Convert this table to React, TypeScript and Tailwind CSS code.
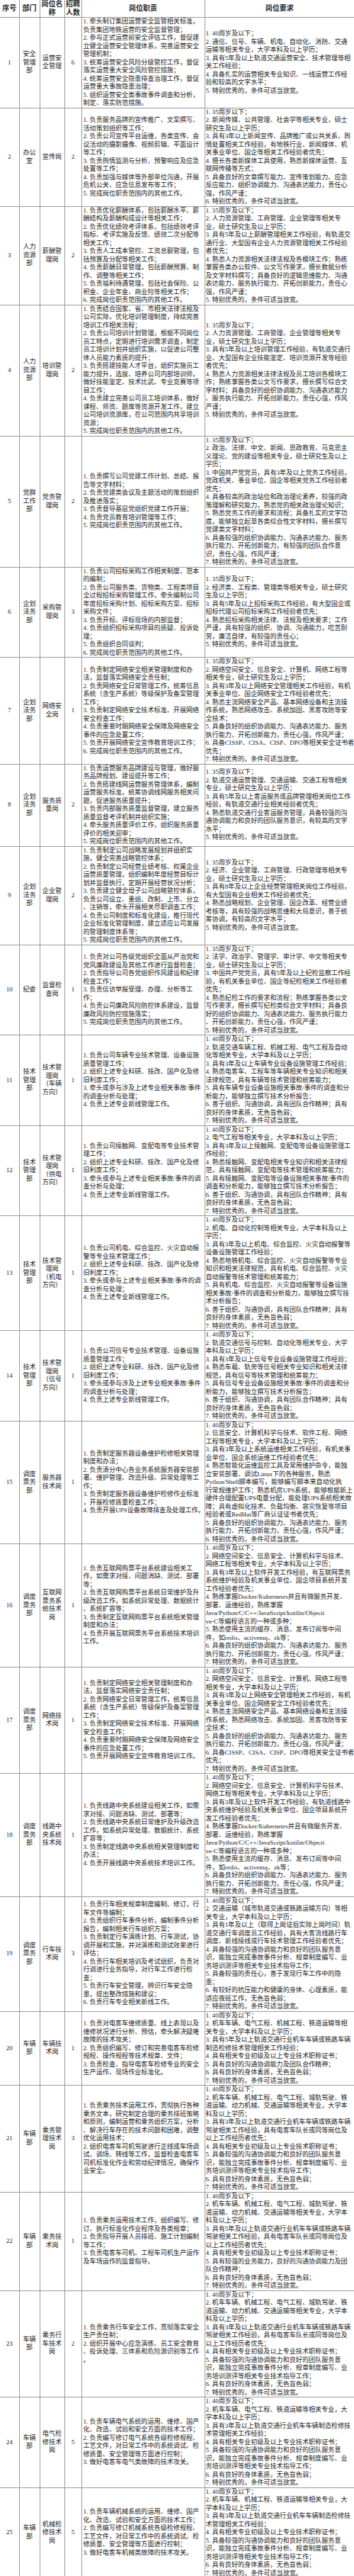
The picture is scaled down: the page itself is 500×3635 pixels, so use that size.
type Row = {
  no: number;
  dept: string[];
  post: string[];
  count: number;
  duty: string[];
  req: string[];
};

const TECH = ["技术", "管理", "部"];
const DISPATCH = ["调度", "票务", "部"];
const PLAN = ["企划", "法务", "部"];
const HR = ["人力", "资源", "部"];
const CAR = ["车辆", "部"];

const techDuty = (a: string, b: string) => [
  a,
  b,
  "2. 组织上述专业科研、技改、国产化及修",
  "旧利废工作；",
];

const rows: Row[] = [
  {
    no: 1,
    dept: ["安全", "管理", "部"],
    post: ["运营安", "全管理"],
    count: 6,
    duty: [
      "1. 牵头制订集团运营安全监管相关标准，",
      "负责集团地铁运营的安全监督管理；",
      "2. 参与正式运营前安全评估工作，督促建",
      "立健全运营安全管理体系，完善运营安全",
      "管理机制；",
      "3. 统筹运营安全风险分级管控工作，督促",
      "落实运营重大安全风险管控措施；",
      "4. 统筹运营安全隐患排查治理工作，督促",
      "运营重大事故隐患治理；",
      "5. 组织运营安全类事故事件调查和分析，",
      "制定、落实防范措施。",
    ],
    req: [
      "1. 40周岁及以下；",
      "2. 通信、信号、车辆、机电、自动化、消防、交通",
      "运输等相关专业，大学本科及以上学历；",
      "3. 具有5年及以上轨道交通运营安全、技术管理等相",
      "关工作经验；",
      "4. 具备扎实的运营相关专业知识、一线运营工作经",
      "验和较高的文字水平；",
      "5. 特别优秀的，条件可适当放宽。",
    ],
  },
  {
    no: 2,
    dept: ["办公", "室"],
    post: ["宣传岗"],
    count: 2,
    duty: [
      "1. 负责服务品牌的宣传推广、文案撰写、",
      "活动策划组织等工作；",
      "2. 负责公司宣传平台运维，各类宣传、会",
      "议活动的摄影摄像、视频剪辑、平面设计",
      "等工作；",
      "3. 负责舆情监测与分析、预警响应及应急",
      "处置等工作；",
      "4. 负责加强与媒体等外部单位沟通，开展",
      "危机公关、应急信息发布等工作；",
      "5. 完成岗位职责范围内的其他工作。",
    ],
    req: [
      "1. 35周岁以下；",
      "2. 新闻传媒、公共管理、社会学等相关专业，硕士",
      "研究生及以上学历；",
      "3. 具有3年以上新闻宣传、品牌推广或公共关系、舆",
      "情处置相关工作经验，有地铁行业、新闻媒体、机",
      "关事业单位、国企等相关工作经验者优先；",
      "4. 擅长各类新媒体工具使用，熟悉新媒体运营、互",
      "联网传播等方式；",
      "5. 具备良好的文章撰写能力、宣传策划能力、应急",
      "反应能力、组织协调能力、沟通表达能力，责任心",
      "强，作风严谨；",
      "6. 特别优秀的，条件可适当放宽。",
    ],
  },
  {
    no: 3,
    dept: HR,
    post: ["薪酬管", "理岗"],
    count: 2,
    duty: [
      "1. 负责优化薪酬体系，包括薪酬水平、薪",
      "酬结构及薪酬构成设计等相关工作；",
      "2. 负责优化绩效考评体系，包括绩效考评",
      "指标、考评实施及反馈、绩效二次分配等",
      "相关工作；",
      "3. 负责人工成本管控、工资总额管理，包",
      "括预算及分配等相关工作；",
      "4. 负责薪酬日常管理，包括薪酬预算、制",
      "作、调整等相关工作；",
      "5. 负责福利待遇管理，包括社会保险、公",
      "积金、企业年金、商业险等相关工作；",
      "6. 完成岗位职责范围内的其他工作。",
    ],
    req: [
      "1. 35周岁及以下；",
      "2. 人力资源管理、工商管理、企业管理等相关专",
      "业，硕士研究生及以上学历；",
      "3. 具有5年及以上薪酬管理相关工作经验，有轨道交",
      "通行业、大型国有企业人力资源管理相关工作经验",
      "者优先；",
      "4. 熟悉人力资源相关法律法规及各模块工作；熟练",
      "掌握各类办公软件、公文写作要求，擅长数据分析",
      "及文字材料撰写；具备良好的逻辑思维能力、沟通",
      "表达能力、服务执行能力、开拓创新能力，责任心",
      "强，作风严谨；",
      "5. 特别优秀的，条件可适当放宽。",
    ],
  },
  {
    no: 4,
    dept: HR,
    post: ["培训管", "理岗"],
    count: 2,
    duty: [
      "1. 负责结合国家、省、市相关法律法规及",
      "公司实际，优化培训管理制度，持续完善",
      "培训工作相关流程；",
      "2. 负责公司培训计划管理，根据不同岗位",
      "员工特点，定期进行培训需求调查，制定",
      "员工培训计划并组织实施，以促进公司整",
      "体人员能力素质的提升；",
      "3. 负责搭建技能人才平台，组织实施员工",
      "能力提升，选拔、培养公司内部培训师，",
      "做好技能鉴定、技术比武、专业竞赛等项",
      "目工作；",
      "4. 负责建立完善公司员工培训体系，做好",
      "课程、师资、题库等资源开发工作，建立",
      "公司培训资源库，在公司范围内共享培训",
      "资源；",
      "5. 完成岗位职责范围内的其他工作。",
    ],
    req: [
      "1. 35周岁及以下；",
      "2. 人力资源管理、工商管理、企业管理等相关专",
      "业，硕士研究生及以上学历；",
      "3. 具有5年及以上培训管理工作经验，有轨道交通行",
      "业、大型国有企业技能鉴定、培训资源开发等经验",
      "者优先；",
      "4. 熟悉人力资源相关法律法规及员工培训各模块工",
      "作；熟练掌握各类公文写作要求，擅长撰写综合文",
      "字材料；具备良好的组织协调能力、沟通表达能力",
      "、服务执行能力、开拓创新能力，责任心强，作风",
      "严谨；",
      "5. 特别优秀的，条件可适当放宽。",
    ],
  },
  {
    no: 5,
    dept: ["党群", "工作", "部"],
    post: ["党务管", "理岗"],
    count: 2,
    duty: [
      "1. 负责撰写公司党建工作计划、总结、报",
      "告等文字材料；",
      "2. 负责党建类会议及主题活动的策划组织",
      "及推进落实；",
      "3. 负责督导基层党组织党建工作开展；",
      "4. 负责党员教育培训管理等工作；",
      "5. 完成岗位职责范围内的其他工作。",
    ],
    req: [
      "1. 35周岁及以下；",
      "2. 政治、法律、中文、新闻、思政教育、马克思主",
      "义理论、党的建设等相关专业，硕士研究生及以上",
      "学历；",
      "3. 中国共产党党员，具有3年及以上党务工作经验，",
      "党政机关、事业单位、国企等相关党务工作经验者",
      "优先；",
      "4. 具备较高的政治站位和政治理论素养，较强的政",
      "策理解和研究能力，熟悉党的相关政治理论知识；",
      "5. 熟悉党务工作的要求和流程；具备扎实的文字功",
      "底，能够独立起草各类综合性文字材料，擅长撰写",
      "党建类文字材料；",
      "6. 具备较强的组织协调能力、沟通表达能力、服务",
      "执行能力、开拓创新能力，有较强的团队合作意",
      "识，责任心强，作风严谨；",
      "7. 特别优秀的，条件可适当放宽。",
    ],
  },
  {
    no: 6,
    dept: PLAN,
    post: ["采购管", "理岗"],
    count: 3,
    duty: [
      "1. 负责公司招标采购工作相关制度、范本",
      "的编制；",
      "2. 负责公司服务类、货物类、工程类项目",
      "全过程招标采购管理工作，牵头编制公司",
      "年度招标采购计划、招标采购方案、招标",
      "采购文件；",
      "3. 负责开标、评标现场的内部监督；",
      "4. 负责组织招标采购项目的质疑、投诉处",
      "理；",
      "5. 负责组织合同谈判；",
      "6. 完成岗位职责范围内的其他工作。",
    ],
    req: [
      "1. 35周岁及以下；",
      "2. 经济类、工程类、管理类等相关专业，硕士研究",
      "生及以上学历；",
      "3. 具有5年及以上招标采购工作经验，有大型国企或",
      "招标代理公司招标采购工作经验者优先；",
      "4. 熟悉招标采购相关法律、法规及相关要求；工作",
      "严谨，具有较强的组织、协调、沟通能力，吃苦耐",
      "劳，廉洁自律，有较强的责任心；",
      "5. 特别优秀的，条件可适当放宽。",
    ],
  },
  {
    no: 7,
    dept: PLAN,
    post: ["网络安", "全岗"],
    count: 1,
    duty: [
      "1. 负责制定网络安全相关管理制度和办",
      "法，监督落实网络安全责任制；",
      "2. 负责网络安全日常管理工作，统筹信息",
      "系统（含生产系统）等级保护及备案管理",
      "工作；",
      "3. 负责制定网络安全技术标准、开展网络",
      "安全检查工作；",
      "4. 负责重要时期网络安全保障及网络安全",
      "事件的应急处置工作；",
      "5. 负责开展网络安全宣传教育培训工作；",
      "6. 完成岗位职责范围内的其他工作。",
    ],
    req: [
      "1. 35周岁及以下；",
      "2. 网络空间安全、信息安全、计算机、网络工程等",
      "相关专业，硕士研究生及以上学历；",
      "3. 具有3年及以上网络安全管理相关工作经验，有机",
      "关事业单位、国企网络安全工作经验者优先；",
      "4. 熟悉主流网络安全产品、基本网络设备和主流操",
      "作系统，熟悉网络攻击、系统加固、黑客攻防等安",
      "全技术；",
      "5. 具备良好的组织协调能力、沟通表达能力、服务",
      "执行能力、开拓创新能力，责任心强，作风严谨；",
      "6. 具备CISSP、CISA、CISP、DPO等相关安全证书者",
      "优先；",
      "7. 特别优秀的，条件可适当放宽。",
    ],
  },
  {
    no: 8,
    dept: PLAN,
    post: ["服务质", "量岗"],
    count: 2,
    duty: [
      "1. 负责运营服务品牌建设与管理，做好服",
      "务品牌规划、建设提升等工作；",
      "2. 负责搭建线网运营服务管理体系，编制",
      "运营服务标准，统筹协调线网服务相关问",
      "题，促进服务质量提升；",
      "3. 负责内部服务质量监督管理，建立服务",
      "质量监督考评机制并组织实施；",
      "4. 牵头服务质量评价工作，组织服务质量",
      "评价的相关迎审；",
      "5. 完成岗位职责范围内的其他工作。",
    ],
    req: [
      "1. 35周岁及以下；",
      "2. 轨道交通运营管理、交通运输、交通工程等相关",
      "专业，硕士研究生及以上学历；",
      "3. 具有5年及以上客运服务或品牌管理相关岗位工作",
      "经验，有轨道交通行业相关经验者优先；",
      "4. 熟悉轨道交通行业客运服务管理，具备较强的沟",
      "通协调能力和良好的团队服务意识，有较高的文字",
      "水平；",
      "5. 特别优秀的，条件可适当放宽。",
    ],
  },
  {
    no: 9,
    dept: PLAN,
    post: ["企业管", "理岗"],
    count: 2,
    duty: [
      "1. 负责制定公司战略发展规划并组织实",
      "施，健全完善战略管控体系；",
      "2. 负责制定公司经营业绩考核、权属企业",
      "运营质量管理，组织编制年度经营目标计",
      "划并监督执行，定期开展经营状况分析；",
      "3. 负责建立健全母子公司战略管控体系，",
      "负责公司设立、重组、改制、上市、分立",
      "、注销等，牵头开展相关尽职调查工作；",
      "4. 负责公司制度和标准化建设，推行现代",
      "企业标准化管理制度，建立适应公司发展",
      "的管理制度体系等；",
      "5. 完成岗位职责范围内的其他工作。",
    ],
    req: [
      "1. 35周岁及以下；",
      "2. 经济、企业管理、工商管理、行政管理等相关专",
      "业，硕士研究生及以上学历；",
      "3. 具有8年及以上企业经营管理相关岗位工作经验，",
      "有大型国有企业相关工作经验者优先；",
      "4. 熟悉战略规划、企业管理、国企改革、经营业绩",
      "考核等，具有较强的战略思维和大局意识，善于统",
      "筹协调，有较高的文字水平；",
      "5. 特别优秀的，条件可适当放宽。",
    ],
  },
  {
    no: 10,
    dept: ["纪委"],
    post: ["监督检", "查岗"],
    count: 1,
    duty: [
      "1. 负责对公司各级党组织全面从严治党和",
      "党风廉政建设及其他工作进行监督检查；",
      "2. 负责指导公司各党组织作风建设和纪律",
      "检查工作；",
      "3. 负责信访举报受理、办理、分析等工",
      "作；",
      "4. 负责公司廉政风险防控体系建设，监督",
      "廉政风险防控措施落实；",
      "5. 完成岗位职责范围内的其他工作。",
    ],
    req: [
      "1. 35周岁及以下；",
      "2. 法学、政治学、管理学、审计学、中文等相关专",
      "业，硕士研究生及以上学历；",
      "3. 中国共产党党员，具有5年及以上纪检监察工作经",
      "验，有机关事业单位、国企等纪检相关工作经验者",
      "优先；",
      "4. 熟悉纪检工作的要求和流程；熟练掌握各类公文",
      "写作要求，擅长撰写纪检类综合文字材料；具备良",
      "好的组织协调能力、沟通表达能力、服务执行能力",
      "、开拓创新能力，责任心强，作风严谨；",
      "5. 特别优秀的，条件可适当放宽。",
    ],
  },
  {
    no: 11,
    dept: TECH,
    post: ["技术管", "理岗", "（车辆", "方向）"],
    count: 1,
    duty: [
      ...techDuty("1. 负责公司车辆专业技术管理、设备设施", "质量管理工作；"),
      "3. 牵头或参与涉及上述专业相关事故/事件",
      "的调查分析与处理；",
      "4. 负责上述专业新线管理工作。",
    ],
    req: [
      "1. 40周岁及以下；",
      "2. 轨道交通车辆工程、机械工程、电气工程及自动",
      "化等相关专业，大学本科及以上学历；",
      "3. 具有3年及以上车辆专业设备设施管理工作经验；",
      "4. 熟悉电客车、工程车等车辆相关专业知识和相关",
      "法律规范，具有车辆等技术管理和统筹能力；",
      "5. 具有车辆专业设备设施相关事故/事件的调查和分",
      "析能力，能够独立撰写技术分析报告；",
      "6. 善于组织、沟通协调，具有团队合作精神；具有",
      "良好的身体素质，无色盲色弱；",
      "7. 特别优秀的，条件可适当放宽。",
    ],
  },
  {
    no: 12,
    dept: TECH,
    post: ["技术管", "理岗", "（供电", "方向）"],
    count: 1,
    duty: [
      ...techDuty("1. 负责公司接触网、变配电等专业技术管", "理工作；"),
      "3. 牵头或参与上述专业相关事故/事件的调",
      "查分析与处理；",
      "4. 负责上述专业新线管理工作。",
    ],
    req: [
      "1. 40周岁及以下；",
      "2. 电气工程等相关专业，大学本科及以上学历；",
      "3. 具有3年及以上接触网、变配电等设备设施管理工",
      "作经验；",
      "4. 熟悉接触网、变配电相关专业知识和相关法律规",
      "范，具有接触网、变配电等技术管理和统筹能力；",
      "5. 具有接触网、变配电等设备设施相关事故/事件的",
      "调查和分析能力，能够独立撰写技术分析报告；",
      "6. 善于组织、沟通协调，具有团队合作精神；具有",
      "良好的身体素质，无色盲色弱；",
      "7. 特别优秀的，条件可适当放宽。",
    ],
  },
  {
    no: 13,
    dept: TECH,
    post: ["技术管", "理岗", "（机电", "方向）"],
    count: 1,
    duty: [
      ...techDuty("1. 负责公司机电、综合监控、火灾自动报", "警等专业技术管理工作；"),
      "3. 牵头或参与上述专业相关事故/事件的调",
      "查分析与处理；",
      "4. 负责上述专业新线管理工作。",
    ],
    req: [
      "1. 40周岁及以下；",
      "2. 机电、自动化控制等相关专业，大学本科及以上",
      "学历；",
      "3. 具有3年及以上机电、综合监控、火灾自动报警等",
      "设备设施管理工作经验；",
      "4. 熟悉地铁机电、综合监控、火灾自动报警等专业",
      "知识和相关法律规范，具有机电、综合监控、火灾",
      "自动报警等技术管理和统筹能力；",
      "5. 具有机电、综合监控、火灾自动报警等设备设施",
      "相关事故/事件的调查和分析能力，能够独立撰写技",
      "术分析报告；",
      "6. 善于组织、沟通协调，具有团队合作精神；具有",
      "良好的身体素质，无色盲色弱；",
      "7. 特别优秀的，条件可适当放宽。",
    ],
  },
  {
    no: 14,
    dept: TECH,
    post: ["技术管", "理岗", "（信号", "方向）"],
    count: 1,
    duty: [
      ...techDuty("1. 负责公司信号专业技术管理、设备设施", "质量管理工作；"),
      "3. 牵头或参与涉及上述专业相关事故/事件",
      "的调查分析与处理；",
      "4. 负责上述专业新线管理工作。",
    ],
    req: [
      "1. 40周岁及以下；",
      "2. 轨道交通信号与控制、自动化等相关专业，大学",
      "本科及以上学历；",
      "3. 具有3年及以上信号专业设备设施管理工作经验；",
      "4. 熟悉车载、轨旁等信号相关专业知识和相关法律",
      "规范，具有信号等技术管理和统筹能力；",
      "5. 具有信号专业设备设施相关事故/事件的调查和分",
      "析能力，能够独立撰写技术分析报告；",
      "6. 善于组织、沟通协调，具有团队合作精神；具有",
      "良好的身体素质，无色盲色弱；",
      "7. 特别优秀的，条件可适当放宽。",
    ],
  },
  {
    no: 15,
    dept: DISPATCH,
    post: ["服务器", "技术岗"],
    count: 1,
    duty: [
      "1. 负责制定服务器设备维护检修相关管理",
      "制度和办法；",
      "2. 负责清分中心各业务系统服务器安装部",
      "署、维护管理、改造升级、异常处理等工",
      "作；",
      "3. 负责制定服务器设备维护检修作业标准",
      "，开展检修质量检查工作；",
      "4. 负责开展UPS设备故障排查及处理工作。",
    ],
    req: [
      "1. 40周岁及以下；",
      "2. 信息安全、计算机科学与技术、软件工程、网络",
      "工程等相关专业，大学本科及以上学历；",
      "3. 具有3年及以上系统运维相关工作经验，有机关事",
      "业单位、国企系统运维工作经验者优先；",
      "4. 熟悉智能化运维监控工具及常用维护命令，能独",
      "立安装部署、调试Linux下的各种服务，熟悉",
      "Python/Shell脚本编写，能够编写脚本来自动化执",
      "行常规维护工作；熟悉机房UPS系统，能够根据新上",
      "硬件合理配置UPS电量分配，能处理UPS系统相关故",
      "障；具有虚拟化技术、负载均衡、容灾恢复等项目",
      "经验者或RedHat等厂商认证证书者优先；",
      "5. 具备良好的组织协调能力、沟通表达能力、服务",
      "执行能力、开拓创新能力，责任心强，作风严谨；",
      "6. 特别优秀的，条件可适当放宽。",
    ],
  },
  {
    no: 16,
    dept: DISPATCH,
    post: ["互联网", "票务系", "统技术", "岗"],
    count: 1,
    duty: [
      "1. 负责互联网购票平台系统建设相关工",
      "作，如需求对接、问题消缺、测试、部署",
      "等；",
      "2. 负责互联网购票平台系统日常维护及升",
      "级改造工作，如系统异常处理、数据统计",
      "、系统扩容等；",
      "3. 负责制定互联网购票平台系统相关管理",
      "制度和办法；",
      "4. 负责开展互联网票务平台系统技术培训",
      "工作。",
    ],
    req: [
      "1. 40周岁及以下；",
      "2. 网络空间安全、信息安全、计算机科学与技术、",
      "网络工程等相关专业，大学本科及以上学历；",
      "3. 具有3年及以上软件开发工作经验，有互联网票务",
      "系统维护经验及机关事业单位、国企项目系统开发",
      "工作经验者优先；",
      "4. 熟练掌握Docker/Kubernetes并且有微服务开发、",
      "部署、运维经验，熟练掌握",
      "Java/Python/C/C++/JavaScript/kotilin/Objecti",
      "ve-C等编程语言的一种或多种；",
      "5. 熟悉使用主流的缓存、消息、发布订阅等中间",
      "件，如redis、activemq、zk等；",
      "6. 具备良好的组织协调能力、沟通表达能力、服务",
      "执行能力、开拓创新能力，责任心强，作风严谨；",
      "7. 特别优秀的，条件可适当放宽。",
    ],
  },
  {
    no: 17,
    dept: DISPATCH,
    post: ["网络技", "术岗"],
    count: 1,
    duty: [
      "1. 负责制定网络安全相关管理制度和办",
      "法，监督落实网络安全责任制；",
      "2. 负责网络安全日常管理工作，统筹信息",
      "系统（含生产系统）等级保护及备案管理",
      "工作；",
      "3. 负责制定网络安全技术标准、开展网络",
      "安全检查工作；",
      "4. 负责重要时期网络安全保障及网络安全",
      "事件的应急处置工作；",
      "5. 负责开展网络安全宣传教育培训工作。",
    ],
    req: [
      "1. 40周岁及以下；",
      "2. 网络空间安全、信息安全、计算机、网络工程等",
      "相关专业，大学本科及以上学历；",
      "3. 具有3年及以上网络安全管理相关工作经验，有机",
      "关事业单位、国企网络安全工作经验者优先；",
      "4. 熟悉主流网络安全产品、基本网络设备和主流操",
      "作系统，熟悉网络攻击、系统加固、黑客攻防等安",
      "全技术；",
      "5. 具备良好的组织协调能力、沟通表达能力、服务",
      "执行能力、开拓创新能力，责任心强，作风严谨；",
      "6. 具备CISSP、CISA、CISP、DPO等相关安全证书者",
      "优先；",
      "7. 特别优秀的，条件可适当放宽。",
    ],
  },
  {
    no: 18,
    dept: DISPATCH,
    post: ["线路中", "央系统", "技术岗"],
    count: 1,
    duty: [
      "1. 负责线路中央系统建设相关工作，如需",
      "求对接、问题消缺、测试、部署等；",
      "2. 负责线路中央系统日常维护及升级改造",
      "工作，如系统异常处理、数据统计、系统",
      "扩容等；",
      "3. 负责制定线路中央系统相关管理制度和",
      "办法；",
      "4. 负责开展线路中央系统技术培训工作。",
    ],
    req: [
      "1. 40周岁及以下；",
      "2. 网络空间安全、信息安全、计算机科学与技术、",
      "网络工程等相关专业，大学本科及以上学历；",
      "3. 具有3年及以上软件开发工作经验，有轨道线路中",
      "央系统维护经验及机关事业单位、国企项目系统开",
      "发工作经验者优先；",
      "4. 熟练掌握Docker/Kubernetes并且有微服务开发、",
      "部署、运维经验，熟练掌握",
      "Java/Python/C/C++/JavaScript/kotilin/Objecti",
      "ve-C等编程语言的一种或多种；",
      "5. 熟悉使用主流的缓存、消息、发布订阅等中间",
      "件，如redis、activemq、zk等；",
      "6. 具备良好的组织协调能力、沟通表达能力、服务",
      "执行能力、开拓创新能力，责任心强，作风严谨；",
      "7. 特别优秀的，条件可适当放宽。",
    ],
  },
  {
    no: 19,
    dept: DISPATCH,
    post: ["行车技", "术岗"],
    count: 3,
    duty: [
      "1. 负责行车相关规章制度编制、修订，行",
      "车文件等编制；",
      "2. 负责组织行车事件分析，编制事件分析",
      "报告，编制相关行车组织方案；",
      "3. 负责制定行车演练计划、行车测试，协",
      "调开展和实施，并对演练和测试效果进行",
      "评估；",
      "4. 负责行车相关培训及考试组织，负责对",
      "行调进行业务指导，对行车工作进行检",
      "查；",
      "5. 负责行车安全管理，辨识行车安全隐",
      "患，提出整改措施和建议；",
      "6. 负责行车专业相关新线工作。",
    ],
    req: [
      "1. 40周岁及以下；",
      "2. 交通运输（城市轨道交通或铁路运输方向）等相",
      "关专业，大学本科及以上学历；",
      "3. 具有1年及以上（取得上岗证后实际上岗时间）轨",
      "道交通行车调度员工作经验，具有大客流线路行车",
      "调度、新线接线或行车技术管理工作经验者优先；",
      "4. 具备较强的沟通协调能力和良好的团队服务意",
      "识，能独立完成事故事件分析、规章制度编写、业",
      "务培训测评等相关专业技术指导工作；",
      "5. 具备较强的责任心，善于发现行车工作中的隐",
      "患；",
      "6. 有较好的抗压能力和健康的身体、心理素质，能",
      "适应夜班工作，无色盲色弱；",
      "7. 特别优秀的，条件可适当放宽。",
    ],
  },
  {
    no: 20,
    dept: CAR,
    post: ["车辆技", "术岗"],
    count: 1,
    duty: [
      "1. 负责对电客车维修质量、线上表现以及",
      "维修状况进行分析、预估，牵头解决疑难",
      "故障的技术攻关；",
      "2. 负责组织编写、修订和完善电客车检修",
      "规程、操作规程等技术规章、文件；",
      "3. 负责检查、指导电客车检修专业的安全",
      "生产运作、现场作业标准化。",
    ],
    req: [
      "1. 40周岁及以下；",
      "2. 机车车辆、电气工程、机械工程、铁道运输等相",
      "关专业，大学本科及以上学历；",
      "3. 具有5年及以上轨道交通行业机车车辆或铁路车辆",
      "制造检修技术管理相关工作经验；",
      "4. 具有相关专业初级及以上专业技术职称证书；",
      "5. 具有良好的沟通协调能力及团队合作精神；",
      "6. 具有良好的身体素质，无色盲色弱；",
      "7. 特别优秀的，条件可适当放宽。",
    ],
  },
  {
    no: 21,
    dept: CAR,
    post: ["乘务管", "理技术", "岗"],
    count: 3,
    duty: [
      "1. 负责乘务技术运用工作，贯彻执行各种",
      "乘务文本，研究制定合理的乘务排班策略",
      "和原则，编制运营和乘务组织方案，分析",
      "、解决行车存在的技术问题和困难，调整",
      "优化运用技术；",
      "2. 组织电客车司机驾驶进行正线或车场调",
      "试、调场、转线等工作，监督检查电客车",
      "司机标准化作业和劳动纪律情况，确保作",
      "业安全。",
    ],
    req: [
      "1. 40周岁及以下；",
      "2. 机车车辆、机械工程、电气工程、城轨驾驶、铁",
      "道运输、动力机械、交通运输等相关专业，大学本",
      "科及以上学历；",
      "3. 具有3年及以上轨道交通行业机车车辆或铁路车辆",
      "驾驶相关工作经验，具有电客车队长或同等岗位及",
      "以上工作经历者优先；",
      "4. 具有相关专业初级及以上专业技术职称证书；",
      "5. 具备较强的沟通协调能力和良好的团队服务意",
      "识，能独立完成事故事件分析、规章制度编写、业",
      "务培训测评等相关专业技术指导工作；",
      "6. 具有良好的身体素质，无色盲色弱；",
      "7. 特别优秀的，条件可适当放宽。",
    ],
  },
  {
    no: 22,
    dept: CAR,
    post: ["乘务技", "术岗"],
    count: 1,
    duty: [
      "1. 负责乘务运用技术工作，组织编写、修",
      "订、执行标准化作业程序及各类规章；",
      "2. 负责指导开展人员排班、施工计划编制",
      "等工作；",
      "3. 负责电客车司机、工程车司机生产运作",
      "及车场运作的监督指导。",
    ],
    req: [
      "1. 40周岁及以下；",
      "2. 机车车辆、机械工程、电气工程、城轨驾驶、铁",
      "道运输、动力机械、交通运输等相关专业，大学本",
      "科及以上学历；",
      "3. 具有5年及以上轨道交通行业机车车辆或铁路车辆",
      "驾驶相关工作经验，具有电客车队长或同等岗位及",
      "以上工作经历者优先；",
      "4. 具有相关专业初级及以上专业技术职称证书；",
      "5. 具有较强的业务能力，良好的沟通协调能力及团",
      "队合作精神；",
      "6. 具有良好的身体素质，无色盲色弱；",
      "7. 特别优秀的，条件可适当放宽。",
    ],
  },
  {
    no: 23,
    dept: CAR,
    post: ["乘务行", "车技术", "岗"],
    count: 2,
    duty: [
      "1. 负责乘务行车安全工作，贯彻落实安全",
      "生产责任制；",
      "2. 组织开展中心应急演练、员工安全教育",
      "、投诉处理、三体系和危险源识别等工作",
      "。",
    ],
    req: [
      "1. 40周岁及以下；",
      "2. 机车车辆、机械工程、电气工程、城轨驾驶、铁",
      "道运输、动力机械、交通运输等相关专业，大学本",
      "科及以上学历；",
      "3. 具有3年及以上轨道交通行业机车车辆或铁路车辆",
      "驾驶相关工作经验，具有电客车队长或同等岗位及",
      "以上工作经历者优先；",
      "4. 具有相关专业初级及以上专业技术职称证书；",
      "5. 具备较强的沟通协调能力和良好的团队服务意",
      "识，能独立完成事故事件分析、规章制度编写、业",
      "务培训测评等相关专业技术指导工作；",
      "6. 具有良好的身体素质，无色盲色弱；",
      "7. 特别优秀的，条件可适当放宽。",
    ],
  },
  {
    no: 24,
    dept: CAR,
    post: ["电气检", "修技术", "岗"],
    count: 5,
    duty: [
      "1. 负责车辆电气系统的运用、维修、国产",
      "化、改造、试验和安全方面的技术工作；",
      "2. 负责编写修订电气系统各级检修规程、",
      "工艺文件，对日常工作中的系统调试、检",
      "修质量、安全管理等方面进行控制；",
      "3. 做好电客车电气类故障的技术攻关。",
    ],
    req: [
      "1. 40周岁及以下；",
      "2. 机车车辆、电气工程、铁道运输等相关专业，大",
      "学本科及以上学历；",
      "3. 具有3年及以上轨道交通行业机车车辆制造检修技",
      "术管理相关工作经验；",
      "4. 具有相关专业初级及以上专业技术职称证书；",
      "5. 具备较强的沟通协调能力和良好的团队服务意",
      "识，能独立完成事故事件分析、规章制度编写、业",
      "务培训测评等相关专业技术指导工作；",
      "6. 具有良好的身体素质，无色盲色弱；",
      "7. 特别优秀的，条件可适当放宽。",
    ],
  },
  {
    no: 25,
    dept: CAR,
    post: ["机械检", "修技术", "岗"],
    count: 5,
    duty: [
      "1. 负责车辆机械系统的运用、维修、国产",
      "化、改造、试验和安全方面的技术工作；",
      "2. 负责编写修订机械系统各级检修规程、",
      "工艺文件，对日常工作中的系统调试、检",
      "修质量、安全管理等方面进行控制；",
      "3. 做好电客车机械类故障的技术攻关。",
    ],
    req: [
      "1. 40周岁及以下；",
      "2. 机车车辆、机械工程、铁道运输等相关专业，大",
      "学本科及以上学历；",
      "3. 具有3年及以上轨道交通行业机车车辆制造检修技",
      "术管理相关工作经验；",
      "4. 具有相关专业初级及以上专业技术职称证书；",
      "5. 具备较强的沟通协调能力和良好的团队服务意",
      "识，能独立完成事故事件分析、规章制度编写、业",
      "务培训测评等相关专业技术指导工作；",
      "6. 具有良好的身体素质，无色盲色弱；",
      "7. 特别优秀的，条件可适当放宽。",
    ],
  },
];

function Lines({ lines }: { lines: string[] }) {
  return (
    <>
      {lines.map((l, i) => (
        <div key={i} className="whitespace-nowrap">
          {l}
        </div>
      ))}
    </>
  );
}

const cell = "border-r border-b border-[#9a9a9a] p-0 align-middle";

export default function App() {
  return (
    <div className="w-[500px] bg-white text-[#222] font-['Liberation_Serif','Noto_Sans_CJK_SC',serif]">
      <table className="w-[500px] table-fixed border-collapse">
        <colgroup>
          <col className="w-[27px]" />
          <col className="w-[29px]" />
          <col className="w-[35px]" />
          <col className="w-[24px]" />
          <col className="w-[174px]" />
          <col className="w-[211px]" />
        </colgroup>

        {/* 表头 */}
        <thead>
          <tr className="text-[10px] leading-[12px] font-bold">
            <th className={`${cell} text-center`}>序号</th>
            <th className={`${cell} text-center`}>部门</th>
            <th className={`${cell} text-center`}>
              <div>岗位名</div>
              <div>称</div>
            </th>
            <th className={`${cell} text-center`}>
              <div>招聘</div>
              <div>人数</div>
            </th>
            <th className={`${cell} text-center`}>岗位职责</th>
            <th className={`${cell} border-r-0 text-center`}>岗位要求</th>
          </tr>
        </thead>

        <tbody className="text-[9.1px] leading-[11.5px]">
          {rows.map((r) => (
            <tr key={r.no}>
              <td className={`${cell} text-center`}>{r.no}</td>
              <td className={`${cell} text-center`}>
                <Lines lines={r.dept} />
              </td>
              <td className={`${cell} text-center`}>
                <Lines lines={r.post} />
              </td>
              <td className={`${cell} text-center`}>{r.count}</td>
              <td className={`${cell} pl-[2px]`}>
                <Lines lines={r.duty} />
              </td>
              <td className={`${cell} border-r-0 pl-[1px]`}>
                <Lines lines={r.req} />
              </td>
            </tr>
          ))}
        </tbody>
      </table>
    </div>
  );
}
